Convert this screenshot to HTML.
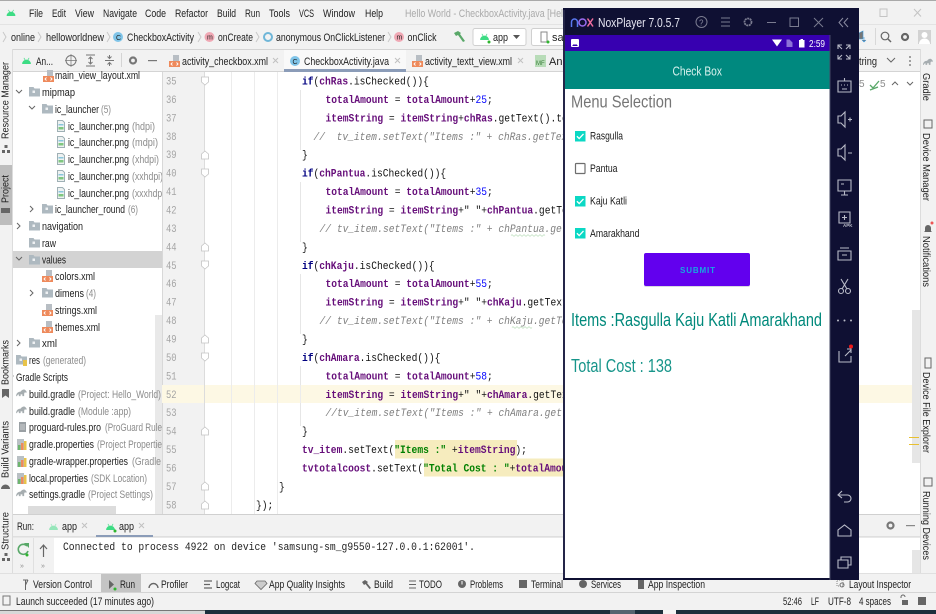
<!DOCTYPE html>
<html><head><meta charset="utf-8"><title>Android Studio</title>
<style>
html,body{margin:0;padding:0;background:#f2f2f2;width:936px;height:614px;overflow:hidden}
svg{display:block;position:absolute;left:0;top:0;filter:blur(.35px)}
text{font-family:"Liberation Sans",sans-serif;font-size:11px;fill:#222;white-space:pre}
.g{fill:#8c8c8c}
.m{font-family:"Liberation Mono",monospace;font-size:11px;font-weight:normal;fill:#111}
.k{fill:#000080;font-weight:bold}.f{fill:#660e7a;font-weight:bold}.n{fill:#0000ff}.s{fill:#008000;font-weight:bold}
.c{fill:#808080;font-style:italic;font-weight:normal}
.l{font-family:"Liberation Mono",monospace;font-size:11px;fill:#a4a4a4;font-weight:normal}
.i{fill:none;stroke:#b9bbc8;stroke-width:1.1}
.t{fill:none;stroke:#666;stroke-width:1}
.v{font-size:10.5px}
</style></head><body>
<svg width="936" height="614" viewBox="0 0 936 614" xmlns="http://www.w3.org/2000/svg">
<defs>
<symbol id="folder" viewBox="0 0 11 10" overflow="visible"><path d="M0 0h4.5l1 1.5h5.5v8h-11z" fill="#aeb9c0"/><rect x="3.5" y="3.5" width="2.5" height="2.5" fill="#fff" opacity=".8"/></symbol>
<symbol id="xml" viewBox="0 0 11 12" overflow="visible"><path d="M4 0h6v6h-6z" fill="#b8bec4"/><rect x="0" y="6" width="11" height="6" fill="#ee8a5c"/><path d="M3.5 7.5l-1.500 1.500 1.500 1.500M7.500 7.500l1.500 1.500-1.500 1.500" fill="none" stroke="#fff" stroke-width=".9"/></symbol>
<symbol id="png" viewBox="0 0 8 12" overflow="visible"><path d="M.5.5h5l2 2v9h-7z" fill="#eef2f2" stroke="#9fb0b5"/><rect x="1.500" y="4" width="5" height="1.500" fill="#88c6dc"/><rect x="1.500" y="7" width="5" height="2.500" fill="#7fc77f"/></symbol>
<symbol id="gr" viewBox="0 0 12 9" overflow="visible"><path d="M0 8c0-3 2-5 5-5 1-2 4-3 5-2s2 2 2 3h-2c-1 0-1 1-1 4h-2v-2h-2v2h-2v-2c-1 0-2 1-2 2z" fill="#a6adb0"/></symbol>
<symbol id="prop" viewBox="0 0 10 11" overflow="visible"><rect x="0" y="0" width="7" height="11" fill="#b9c0c4"/><rect x="1" y="6" width="2.500" height="5" fill="#6db56d"/><rect x="4" y="4" width="2.500" height="7" fill="#ee8a5c"/><rect x="7" y="2" width="2.500" height="9" fill="#e8c44a"/></symbol>
<symbol id="droid" viewBox="0 0 10 8" overflow="visible"><path d="M0 8a5 5 0 0 1 10 0z" fill="#3ddc84"/><path d="M2 1l1.500 2.500M8 1l-1.500 2.500" stroke="#3ddc84" stroke-width=".8"/></symbol>
<symbol id="chk" viewBox="0 0 11 11"><rect width="11" height="11" fill="#0bd8c4"/><path d="M2 5.500l2.400 2.400 4.500-4.800" fill="none" stroke="#fff" stroke-width="1.400"/></symbol>
</defs>

<!-- base -->
<rect width="936" height="614" fill="#f2f2f2"/>
<rect width="936" height="1" fill="#a9a9a9"/>
<rect y="24" width="936" height="1" fill="#e3e3e3"/>
<rect y="49" width="936" height="1" fill="#d4d4d4"/>
<rect y="71" width="936" height="1" fill="#d4d4d4"/>

<!-- title / menu -->
<use href="#droid" x="6" y="9" width="10" height="7"/>
<text x="29" y="17" textLength="14" lengthAdjust="spacingAndGlyphs">File</text>
<text x="52" y="17" textLength="14" lengthAdjust="spacingAndGlyphs">Edit</text>
<text x="75" y="17" textLength="19" lengthAdjust="spacingAndGlyphs">View</text>
<text x="103" y="17" textLength="34" lengthAdjust="spacingAndGlyphs">Navigate</text>
<text x="145" y="17" textLength="21" lengthAdjust="spacingAndGlyphs">Code</text>
<text x="175" y="17" textLength="33" lengthAdjust="spacingAndGlyphs">Refactor</text>
<text x="217" y="17" textLength="19" lengthAdjust="spacingAndGlyphs">Build</text>
<text x="245" y="17" textLength="15" lengthAdjust="spacingAndGlyphs">Run</text>
<text x="269" y="17" textLength="21" lengthAdjust="spacingAndGlyphs">Tools</text>
<text x="299" y="17" textLength="15" lengthAdjust="spacingAndGlyphs">VCS</text>
<text x="323" y="17" textLength="32" lengthAdjust="spacingAndGlyphs">Window</text>
<text x="365" y="17" textLength="18" lengthAdjust="spacingAndGlyphs">Help</text>
<text x="405" y="17" class="g" style="fill:#aaa" textLength="158" lengthAdjust="spacingAndGlyphs">Hello World - CheckboxActivity.java [Hel</text>
<rect x="880" y="9" width="7" height="7.500" fill="none" stroke="#c4c4c4"/>
<path d="M914 9l7 7.500M921 9l-7 7.500" stroke="#c4c4c4"/>

<!-- breadcrumb -->
<path d="M3 32l3 5-3 5M38 32l3 5-3 5M107 32l3 5-3 5M198 32l3 5-3 5M256 32l3 5-3 5M388 32l3 5-3 5" fill="none" stroke="#c8c8c8"/>
<text x="11" y="41" textLength="24" lengthAdjust="spacingAndGlyphs">online</text>
<text x="46" y="41" textLength="58" lengthAdjust="spacingAndGlyphs">helloworldnew</text>
<circle cx="118" cy="37" r="5" fill="#7fc4e8"/><text x="116" y="40" style="font-size:7px">C</text>
<text x="127" y="41" textLength="67" lengthAdjust="spacingAndGlyphs">CheckboxActivity</text>
<circle cx="209.500" cy="37" r="5" fill="#f0a8b4"/><text x="207" y="39.500" style="font-size:7px">m</text>
<text x="218" y="41" textLength="35" lengthAdjust="spacingAndGlyphs">onCreate</text>
<circle cx="268" cy="37" r="4" fill="none" stroke="#6fb6d8" stroke-width="2"/>
<text x="276" y="41" textLength="109" lengthAdjust="spacingAndGlyphs">anonymous OnClickListener</text>
<circle cx="399" cy="37" r="5" fill="#f0a8b4"/><text x="396.500" y="39.500" style="font-size:7px">m</text>
<text x="407.500" y="41" textLength="29" lengthAdjust="spacingAndGlyphs">onClick</text>
<path d="M454 33l4-2 3 2-1 1 5 7-2 1-5-7-2 1z" fill="#59a869"/>
<rect x="473" y="28.500" width="53" height="17" rx="2" fill="#fff" stroke="#d0d0d0"/>
<use href="#droid" x="480" y="33" width="9" height="7"/><circle cx="489" cy="42" r="1.500" fill="#2fb52f"/>
<text x="493" y="41" textLength="15" lengthAdjust="spacingAndGlyphs">app</text>
<path d="M513 35h7l-3.500 4z" fill="#555"/>
<rect x="531.500" y="28.500" width="40" height="17" rx="2" fill="#fff" stroke="#d0d0d0"/>
<rect x="541" y="32" width="6" height="10" fill="none" stroke="#888"/><circle cx="548" cy="42" r="1.500" fill="#2fb52f"/>
<text x="552" y="41">sam</text>
<!-- right toolbar -->
<rect x="875" y="28" width="1" height="17" fill="#d8d8d8"/>
<path d="M859 33l4-2v8h-4zM864 37v5m-2-2l2 2 2-2" fill="#777" stroke="#3f97d8" stroke-width=".6"/>
<circle cx="885" cy="36" r="3.800" fill="none" stroke="#666" stroke-width="1.200"/><path d="M888 39l3 3" stroke="#666" stroke-width="1.500"/>
<circle cx="905" cy="37" r="3" fill="none" stroke="#666" stroke-width="2.200"/>
<rect x="918" y="30" width="13" height="14" fill="#d2d2d2"/><circle cx="924.500" cy="35" r="3" fill="#fff"/><path d="M919 44a5.500 5.500 0 0 1 11 0z" fill="#fff"/>

<!-- project header -->
<use href="#droid" x="22" y="57" width="9" height="7"/>
<text x="36" y="65" textLength="17" lengthAdjust="spacingAndGlyphs">An...</text>
<circle cx="71" cy="60.500" r="5" fill="none" stroke="#777"/><path d="M71 54v13M65 60.500h12" stroke="#777" stroke-width=".7"/>
<path d="M86 55h9M86 66h9M90.500 57v7M88.500 59l2-2 2 2M88.500 62l2 2 2-2" fill="none" stroke="#777"/>
<path d="M105 60.500h9M109.500 55v3M107.500 56.500l2 2 2-2M109.500 66v-3M107.500 64.500l2-2 2 2" fill="none" stroke="#777"/>
<rect x="121" y="53" width="1" height="14" fill="#d4d4d4"/>
<circle cx="133" cy="60.500" r="3" fill="none" stroke="#777" stroke-width="2.200"/>
<rect x="148" y="60" width="9" height="1.200" fill="#777"/>

<!-- tree -->
<rect x="12" y="72" width="150" height="443" fill="#fff"/>
<rect x="12" y="251" width="150" height="17" fill="#d3d3d3"/>
<rect x="155" y="315" width="7" height="200" fill="#e9e9e9"/>

<use href="#xml" x="43" y="70" width="11" height="12"/>
<text x="55" y="79" textLength="85" lengthAdjust="spacingAndGlyphs">main_view_layout.xml</text>

<path d="M16 90l3 3 3-3M29 106l3 3 3-3M16 257l3 3 3-3" class="t"/>
<path d="M30 206l3 3-3 3M17 223l3 3-3 3M30 290l3 3-3 3M17 340l3 3-3 3M12 374l1 2-1 2" class="t"/>

<use href="#folder" x="29" y="87" width="11" height="10"/><text x="42" y="96" textLength="33" lengthAdjust="spacingAndGlyphs">mipmap</text>
<use href="#folder" x="42" y="104" width="11" height="10"/><text x="55" y="113" textLength="44" lengthAdjust="spacingAndGlyphs">ic_launcher</text><text x="101" y="113" class="g" textLength="10" lengthAdjust="spacingAndGlyphs">(5)</text>

<use href="#png" x="57" y="120" width="8" height="12"/><text x="68" y="130" textLength="61" lengthAdjust="spacingAndGlyphs">ic_launcher.png</text><text x="132" y="130" class="g" textLength="23" lengthAdjust="spacingAndGlyphs">(hdpi)</text>
<use href="#png" x="57" y="136" width="8" height="12"/><text x="68" y="146" textLength="61" lengthAdjust="spacingAndGlyphs">ic_launcher.png</text><text x="132" y="146" class="g" textLength="26" lengthAdjust="spacingAndGlyphs">(mdpi)</text>
<use href="#png" x="57" y="153" width="8" height="12"/><text x="68" y="163" textLength="61" lengthAdjust="spacingAndGlyphs">ic_launcher.png</text><text x="132" y="163" class="g" textLength="27" lengthAdjust="spacingAndGlyphs">(xhdpi)</text>
<use href="#png" x="57" y="170" width="8" height="12"/><text x="68" y="180" textLength="61" lengthAdjust="spacingAndGlyphs">ic_launcher.png</text><text x="132" y="180" class="g" textLength="31" lengthAdjust="spacingAndGlyphs">(xxhdpi)</text>
<use href="#png" x="57" y="187" width="8" height="12"/><text x="68" y="197" textLength="61" lengthAdjust="spacingAndGlyphs">ic_launcher.png</text><text x="132" y="197" class="g" textLength="35" lengthAdjust="spacingAndGlyphs">(xxxhdpi)</text>

<use href="#folder" x="42" y="204" width="11" height="10"/><text x="55" y="213" textLength="70" lengthAdjust="spacingAndGlyphs">ic_launcher_round</text><text x="128" y="213" class="g" textLength="10" lengthAdjust="spacingAndGlyphs">(6)</text>
<use href="#folder" x="29" y="221" width="11" height="10"/><text x="42" y="230" textLength="41" lengthAdjust="spacingAndGlyphs">navigation</text>
<use href="#folder" x="29" y="238" width="11" height="10"/><text x="42" y="247" textLength="14" lengthAdjust="spacingAndGlyphs">raw</text>
<use href="#folder" x="29" y="255" width="11" height="10"/><text x="42" y="263.500" textLength="24" lengthAdjust="spacingAndGlyphs">values</text>
<use href="#xml" x="42" y="270" width="11" height="12"/><text x="55" y="280" textLength="40" lengthAdjust="spacingAndGlyphs">colors.xml</text>
<use href="#folder" x="42" y="288" width="11" height="10"/><text x="55" y="297" textLength="29" lengthAdjust="spacingAndGlyphs">dimens</text><text x="86" y="297" class="g" textLength="10" lengthAdjust="spacingAndGlyphs">(4)</text>
<use href="#xml" x="42" y="304" width="11" height="12"/><text x="55" y="314" textLength="42" lengthAdjust="spacingAndGlyphs">strings.xml</text>
<use href="#xml" x="42" y="321" width="11" height="12"/><text x="55" y="331" textLength="45" lengthAdjust="spacingAndGlyphs">themes.xml</text>
<use href="#folder" x="29" y="338" width="11" height="10"/><text x="42" y="347" textLength="15" lengthAdjust="spacingAndGlyphs">xml</text>
<use href="#folder" x="16" y="355" width="11" height="10"/><rect x="23" y="360" width="4" height="6" fill="#e8c44a"/><text x="29" y="364" textLength="11" lengthAdjust="spacingAndGlyphs">res</text><text x="43" y="364" class="g" textLength="43" lengthAdjust="spacingAndGlyphs">(generated)</text>
<text x="16" y="381" textLength="52" lengthAdjust="spacingAndGlyphs">Gradle Scripts</text>
<use href="#gr" x="16" y="389" width="11" height="8"/><text x="29" y="398" textLength="46" lengthAdjust="spacingAndGlyphs">build.gradle</text><text x="78" y="398" class="g" textLength="83" lengthAdjust="spacingAndGlyphs">(Project: Hello_World)</text>
<use href="#gr" x="16" y="406" width="11" height="8"/><text x="29" y="415" textLength="46" lengthAdjust="spacingAndGlyphs">build.gradle</text><text x="78" y="415" class="g" textLength="53" lengthAdjust="spacingAndGlyphs">(Module :app)</text>
<rect x="19" y="422" width="7" height="10" fill="#9aa0a4"/><path d="M20 425h5M20 427h5M20 429h5" stroke="#fff" stroke-width=".6"/><text x="29" y="431" textLength="72" lengthAdjust="spacingAndGlyphs">proguard-rules.pro</text><text x="105" y="431" class="g" textLength="57" lengthAdjust="spacingAndGlyphs">(ProGuard Rule</text>
<use href="#prop" x="17" y="439" width="10" height="11"/><text x="29" y="448" textLength="65" lengthAdjust="spacingAndGlyphs">gradle.properties</text><text x="97" y="448" class="g" textLength="65" lengthAdjust="spacingAndGlyphs">(Project Propertie</text>
<use href="#prop" x="17" y="456" width="10" height="11"/><text x="29" y="465" textLength="99" lengthAdjust="spacingAndGlyphs">gradle-wrapper.properties</text><text x="132" y="465" class="g" textLength="29" lengthAdjust="spacingAndGlyphs">(Gradle</text>
<use href="#prop" x="17" y="473" width="10" height="11"/><text x="29" y="482" textLength="59" lengthAdjust="spacingAndGlyphs">local.properties</text><text x="91" y="482" class="g" textLength="56" lengthAdjust="spacingAndGlyphs">(SDK Location)</text>
<use href="#gr" x="16" y="489" width="11" height="8"/><text x="29" y="498" textLength="56" lengthAdjust="spacingAndGlyphs">settings.gradle</text><text x="88" y="498" class="g" textLength="65" lengthAdjust="spacingAndGlyphs">(Project Settings)</text>
<rect x="28" y="506" width="88" height="8" fill="#dcdcdc"/>

<!-- left strip -->
<rect x="0" y="49" width="12" height="525" fill="#f2f2f2"/>
<rect x="12" y="49" width="1" height="525" fill="#dcdcdc"/>
<rect x="0" y="165" width="12" height="60" fill="#bdbdbd"/>
<text class="v" transform="translate(8.500,139) rotate(-90)" textLength="77" lengthAdjust="spacingAndGlyphs">Resource Manager</text>
<text class="v" transform="translate(8.500,203) rotate(-90)" textLength="28" lengthAdjust="spacingAndGlyphs">Project</text>
<text class="v" transform="translate(8.500,385) rotate(-90)" textLength="45" lengthAdjust="spacingAndGlyphs">Bookmarks</text>
<text class="v" transform="translate(8.500,478) rotate(-90)" textLength="57" lengthAdjust="spacingAndGlyphs">Build Variants</text>
<text class="v" transform="translate(8.500,550) rotate(-90)" textLength="38" lengthAdjust="spacingAndGlyphs">Structure</text>
<path d="M2 150h3v3h-3zM7 150h3v3h-3zM4.500 145h3v3h-3z" fill="#666"/>
<rect x="1" y="208" width="9" height="5" fill="#666"/>
<path d="M2 389h7v9l-3.500-2.500-3.500 2.500z" fill="#666"/>
<path d="M1 489a4.500 4.500 0 0 1 9 0z" fill="#666"/>
<path d="M2 558h3v3h-3zM7 558h3v3h-3zM4.500 553h3v3h-3z" fill="#666"/>

<!-- editor tabs -->
<rect x="162" y="50" width="774" height="21" fill="#f2f2f2"/>
<use href="#xml" x="169" y="55" width="11" height="12"/>
<text x="182" y="65" textLength="86" lengthAdjust="spacingAndGlyphs">activity_checkbox.xml</text>
<path d="M273 58l5 5M278 58l-5 5" stroke="#c0c0c0"/>
<rect x="284" y="50" width="122" height="21" fill="#fff" opacity=".55"/>
<rect x="284" y="69" width="122" height="3" fill="#8b9cb8"/>
<circle cx="295" cy="61" r="5" fill="#7fc4e8"/><text x="292.500" y="64" style="font-size:7px">C</text>
<text x="304" y="65" textLength="85" lengthAdjust="spacingAndGlyphs">CheckboxActivity.java</text>
<path d="M395 58l5 5M400 58l-5 5" stroke="#c0c0c0"/>
<use href="#xml" x="412" y="55" width="11" height="12"/>
<text x="425" y="65" textLength="87" lengthAdjust="spacingAndGlyphs">activity_textt_view.xml</text>
<path d="M518 58l5 5M523 58l-5 5" stroke="#c0c0c0"/>
<rect x="535" y="55" width="11" height="12" fill="#b8dcb8"/><text x="536" y="65" style="font-size:6px;fill:#3a7f3a">MF</text>
<text x="549" y="65">And</text>
<text x="859" y="65" textLength="18" lengthAdjust="spacingAndGlyphs">tring</text>
<path d="M887 58l4 4 4-4" class="t"/>
<circle cx="910" cy="57" r=".9" fill="#666"/><circle cx="910" cy="61" r=".9" fill="#666"/><circle cx="910" cy="65" r=".9" fill="#666"/>

<!-- editor -->
<rect x="162" y="72" width="758" height="442" fill="#fff"/>
<rect x="162" y="72" width="42" height="442" fill="#f2f2f2"/>
<rect x="162" y="72" width="1" height="442" fill="#d8d8d8"/>
<rect x="162" y="385" width="758" height="18" fill="#fdf8e4"/>
<path d="M204.500 72v442" stroke="#dcdcdc"/>
<path d="M231.500 72v442M254.500 72v442M277.500 72v442" stroke="#ececec"/>
<path d="M300.500 90v60M300.500 182v60M300.500 274v60M300.500 366v60" stroke="#e6e6e6"/>
<rect x="230" y="385" width="75" height="18" fill="#fdf8e4"/>
<path d="M231.500 385v18M254.500 385v18M277.500 385v18M300.500 385v18" stroke="#ececec"/>

<g transform="scale(.8,1)">
<text class="l" x="207.500" y="84.500">35</text><text class="l" x="207.500" y="102.900">36</text><text class="l" x="207.500" y="121.400">37</text><text class="l" x="207.500" y="139.800">38</text><text class="l" x="207.500" y="158.200">39</text><text class="l" x="207.500" y="176.600">40</text><text class="l" x="207.500" y="195.100">41</text><text class="l" x="207.500" y="213.500">42</text><text class="l" x="207.500" y="231.900">43</text><text class="l" x="207.500" y="250.400">44</text><text class="l" x="207.500" y="268.800">45</text><text class="l" x="207.500" y="287.200">46</text><text class="l" x="207.500" y="305.600">47</text><text class="l" x="207.500" y="324.100">48</text><text class="l" x="207.500" y="342.500">49</text><text class="l" x="207.500" y="360.900">50</text><text class="l" x="207.500" y="379.300">51</text><text class="l" x="207.500" y="397.800">52</text><text class="l" x="207.500" y="416.200">53</text><text class="l" x="207.500" y="434.600">54</text><text class="l" x="207.500" y="453.100">55</text><text class="l" x="207.500" y="471.500">56</text><text class="l" x="207.500" y="489.900">57</text><text class="l" x="207.500" y="508.300">58</text>
</g>
<!-- fold markers -->
<g fill="#fff" stroke="#c4c4c4" stroke-width=".8">
<path d="M201.500 77h7v5l-3.500 3-3.500-3z"/><path d="M201.500 169h7v5l-3.500 3-3.500-3z"/><path d="M201.500 261h7v5l-3.500 3-3.500-3z"/><path d="M201.500 353h7v5l-3.500 3-3.500-3z"/>
<path d="M201.500 159h7v-5l-3.500-3-3.500 3z"/><path d="M201.500 251h7v-5l-3.500-3-3.500 3z"/><path d="M201.500 343h7v-5l-3.500-3-3.500 3z"/><path d="M201.500 435h7v-5l-3.500-3-3.500 3z"/><path d="M201.500 490h7v-5l-3.500-3-3.500 3z"/><path d="M201.500 509h7v-5l-3.500-3-3.500 3z"/>
</g>

<rect x="395" y="440" width="122" height="18.500" fill="#f6ecbe"/>
<rect x="424" y="458.500" width="142" height="18" fill="#f6ecbe"/>

<!-- code: 11px mono condensed to the source's 5.77px advance -->
<g transform="scale(.874,1)">
<text class="m" x="345.500" y="84.500"><tspan class="k">if</tspan>(<tspan class="f">chRas</tspan>.isChecked()){</text>
<text class="m" x="372.400" y="102.900"><tspan class="f">totalAmount</tspan> = <tspan class="f">totalAmount</tspan>+<tspan class="n">25</tspan>;</text>
<text class="m" x="372.400" y="121.400"><tspan class="f">itemString</tspan> = <tspan class="f">itemString</tspan>+<tspan class="f">chRas</tspan>.getText().toString();</text>
<text class="m c" x="358.700" y="139.800">//  tv_item.setText("Items :" + chRas.getText().toString());</text>
<text class="m" x="345.500" y="158.200">}</text>
<text class="m" x="345.500" y="176.600"><tspan class="k">if</tspan>(<tspan class="f">chPantua</tspan>.isChecked()){</text>
<text class="m" x="372.400" y="195.100"><tspan class="f">totalAmount</tspan> = <tspan class="f">totalAmount</tspan>+<tspan class="n">35</tspan>;</text>
<text class="m" x="372.400" y="213.500"><tspan class="f">itemString</tspan> = <tspan class="f">itemString</tspan>+" "+<tspan class="f">chPantua</tspan>.getText().toString();</text>
<text class="m c" x="365.600" y="231.900">// tv_item.setText("Items :" + chPantua.getText().toString());</text>
<text class="m" x="345.500" y="250.400">}</text>
<text class="m" x="345.500" y="268.800"><tspan class="k">if</tspan>(<tspan class="f">chKaju</tspan>.isChecked()){</text>
<text class="m" x="372.400" y="287.200"><tspan class="f">totalAmount</tspan> = <tspan class="f">totalAmount</tspan>+<tspan class="n">55</tspan>;</text>
<text class="m" x="372.400" y="305.600"><tspan class="f">itemString</tspan> = <tspan class="f">itemString</tspan>+" "+<tspan class="f">chKaju</tspan>.getText().toString();</text>
<text class="m c" x="365.600" y="324.100">// tv_item.setText("Items :" + chKaju.getText().toString());</text>
<text class="m" x="345.500" y="342.500">}</text>
<text class="m" x="345.500" y="360.900"><tspan class="k">if</tspan>(<tspan class="f">chAmara</tspan>.isChecked()){</text>
<text class="m" x="372.400" y="379.300"><tspan class="f">totalAmount</tspan> = <tspan class="f">totalAmount</tspan>+<tspan class="n">58</tspan>;</text>
<text class="m" x="372.400" y="397.800"><tspan class="f">itemString</tspan> = <tspan class="f">itemString</tspan>+" "+<tspan class="f">chAmara</tspan>.getText().toString();</text>
<text class="m c" x="372.400" y="416.200">//tv_item.setText("Items :" + chAmara.getText().toString());</text>
<text class="m" x="345.500" y="434.600">}</text>
<text class="m" x="345.500" y="453.100"><tspan class="f">tv_item</tspan>.setText(<tspan class="s">"Items :"</tspan> +<tspan class="f">itemString</tspan>);</text>
<text class="m" x="345.500" y="471.500"><tspan class="f">tvtotalcoost</tspan>.setText(<tspan class="s">"Total Cost : "</tspan>+<tspan class="f">totalAmount</tspan>);</text>
<text class="m" x="319.200" y="489.900">}</text>
<text class="m" x="292.900" y="508.300">});</text>
</g>
<path d="M511 235.500q1-1.500 2 0t2 0 2 0 2 0 2 0 2 0 2 0 2 0 2 0 2 0 2 0 2 0 2 0 2 0 2 0 2 0 2 0M512 327.500q1-1.500 2 0t2 0 2 0 2 0 2 0 2 0 2 0 2 0 2 0 2 0" fill="none" stroke="#9ccf9c" stroke-width=".6"/>

<!-- inspection row + editor scrollbar -->
<text x="859" y="87" class="g" style="font-size:10px">5</text>
<path d="M870 85l3 3 6-7M870 90l8-3" fill="none" stroke="#59a869" stroke-width="1.300"/>
<text x="880" y="87" class="g" style="font-size:10px">5</text>
<path d="M892 85l3-3 3 3M907 82l3 3 3-3" class="t"/>
<rect x="912" y="310" width="8" height="153" fill="#e6e6e6"/>
<rect x="909" y="437" width="10" height="1" fill="#e8c030"/>
<rect x="909" y="444" width="10" height="1" fill="#e8c030"/>

<!-- right strip -->
<rect x="920" y="49" width="16" height="543" fill="#f2f2f2"/>
<rect x="920" y="49" width="1" height="525" fill="#dcdcdc"/>
<use href="#gr" x="923" y="58" width="10" height="8"/>
<text class="v" transform="translate(923,73) rotate(90)" textLength="28" lengthAdjust="spacingAndGlyphs">Gradle</text>
<rect x="924" y="120" width="8" height="8" fill="none" stroke="#666"/>
<text class="v" transform="translate(923,133) rotate(90)" textLength="68" lengthAdjust="spacingAndGlyphs">Device Manager</text>
<path d="M924 232h8l-1-1v-3a3 3 0 0 0-6 0v3z" fill="#666"/><circle cx="932" cy="223" r="1.500" fill="#e55"/>
<text class="v" transform="translate(923,236) rotate(90)" textLength="51" lengthAdjust="spacingAndGlyphs">Notifications</text>
<rect x="925" y="358" width="6" height="10" fill="none" stroke="#666"/>
<text class="v" transform="translate(923,372) rotate(90)" textLength="81" lengthAdjust="spacingAndGlyphs">Device File Explorer</text>
<rect x="924" y="478" width="8" height="8" fill="none" stroke="#666"/>
<text class="v" transform="translate(923,491) rotate(90)" textLength="69" lengthAdjust="spacingAndGlyphs">Running Devices</text>

<!-- run panel -->
<rect x="13" y="514" width="907" height="1" fill="#d0d0d0"/>
<rect x="13" y="515" width="907" height="22" fill="#f2f2f2"/>
<rect x="13" y="536" width="907" height="1.500" fill="#dfdfdf"/>
<text x="17" y="530" textLength="17" lengthAdjust="spacingAndGlyphs">Run:</text>
<g opacity=".5"><use href="#droid" x="49" y="523" width="9" height="7"/></g>
<text x="62" y="530" textLength="15" lengthAdjust="spacingAndGlyphs">app</text>
<path d="M82 523l5 5M87 523l-5 5" stroke="#c0c0c0"/>
<use href="#droid" x="106" y="523" width="9" height="7"/><circle cx="115" cy="531" r="1.500" fill="#2fb52f"/>
<text x="119" y="530" textLength="15" lengthAdjust="spacingAndGlyphs">app</text>
<path d="M139 523l5 5M144 523l-5 5" stroke="#c0c0c0"/>
<rect x="96" y="535" width="57" height="2" fill="#8b9cb8"/>
<rect x="13" y="538" width="907" height="35" fill="#fff"/>
<rect x="13" y="538" width="41" height="35" fill="#f2f2f2"/>
<rect x="33" y="538" width="1" height="35" fill="#e0e0e0"/>
<path d="M27 546a5 5 0 1 0 1 5" fill="none" stroke="#59a869" stroke-width="1.600"/><path d="M24 543h5v5z" fill="#59a869"/><circle cx="27" cy="555" r="1.500" fill="#2fb52f"/>
<path d="M43.500 557v-11M40 549l3.500-4 3.500 4" fill="none" stroke="#666" stroke-width="1.200"/>
<text x="20" y="568" class="g" style="font-size:7px">»</text><text x="41" y="568" class="g" style="font-size:7px">»</text>
<text class="m" x="63" y="550" style="fill:#222" textLength="412" lengthAdjust="spacingAndGlyphs">Connected to process 4922 on device 'samsung-sm_g9550-127.0.0.1:62001'.</text>
<rect x="912" y="550" width="8" height="23" fill="#e6e6e6"/>
<circle cx="890.500" cy="525.500" r="3" fill="none" stroke="#777" stroke-width="2.200"/>
<rect x="906" y="525" width="9" height="1.200" fill="#888"/>

<!-- tool window bar -->
<rect y="573" width="936" height="19" fill="#f2f2f2"/>
<rect y="573" width="936" height="1" fill="#e0e0e0"/>
<rect y="592" width="936" height="1" fill="#d4d4d4"/>
<rect x="101" y="574" width="40" height="18" fill="#c4c4c4"/>
<path d="M23 580h5M25.500 580v10M28 580l-2.500 5" fill="none" stroke="#666"/>
<text x="33" y="588" textLength="59" lengthAdjust="spacingAndGlyphs">Version Control</text>
<path d="M109 580l5 4.500-5 4.500z" fill="#666"/><circle cx="115" cy="589" r="1.500" fill="#2fb52f"/>
<text x="120" y="588" textLength="15" lengthAdjust="spacingAndGlyphs">Run</text>
<path d="M149 588a4.500 4.500 0 0 1 9 0" fill="none" stroke="#666" stroke-width="1.400"/>
<text x="161" y="588" textLength="27" lengthAdjust="spacingAndGlyphs">Profiler</text>
<path d="M204 581h8M204 584.500h6M204 588h8" stroke="#666" stroke-width="1.200"/>
<text x="216" y="588" textLength="24" lengthAdjust="spacingAndGlyphs">Logcat</text>
<path d="M257 581h8l2 2.500-6 6-6-6z" fill="#ccc" stroke="#666" stroke-width=".8"/>
<text x="269" y="588" textLength="76" lengthAdjust="spacingAndGlyphs">App Quality Insights</text>
<path d="M362 582l3-2 3 2-1 1 4 5-1.500 1-4-5-1.500 1z" fill="#666"/>
<text x="374" y="588" textLength="19" lengthAdjust="spacingAndGlyphs">Build</text>
<path d="M409 581h7M409 584.500h7M409 588h7" stroke="#666"/>
<text x="419" y="588" textLength="23" lengthAdjust="spacingAndGlyphs">TODO</text>
<circle cx="462" cy="584" r="4" fill="#666"/><rect x="461.500" y="581" width="1" height="3.500" fill="#fff"/>
<text x="470" y="588" textLength="33" lengthAdjust="spacingAndGlyphs">Problems</text>
<rect x="519" y="580" width="8" height="8" fill="#666"/>
<text x="531" y="588" textLength="32" lengthAdjust="spacingAndGlyphs">Terminal</text>
<circle cx="583" cy="584" r="4" fill="#666"/>
<text x="591" y="588" textLength="30" lengthAdjust="spacingAndGlyphs">Services</text>
<rect x="638" y="580" width="6" height="9" fill="#666"/>
<text x="648" y="588" textLength="57" lengthAdjust="spacingAndGlyphs">App Inspection</text>
<rect x="837" y="580" width="6" height="6" fill="none" stroke="#888" stroke-dasharray="1 1"/><circle cx="842" cy="585" r="2" fill="none" stroke="#777"/>
<text x="849" y="588" textLength="62" lengthAdjust="spacingAndGlyphs">Layout Inspector</text>

<!-- status -->
<rect x="3" y="596" width="7" height="9" fill="none" stroke="#777"/>
<text x="16" y="605" textLength="138" lengthAdjust="spacingAndGlyphs">Launch succeeded (17 minutes ago)</text>
<text x="783" y="605" textLength="19" lengthAdjust="spacingAndGlyphs">52:46</text>
<text x="811" y="605" textLength="8" lengthAdjust="spacingAndGlyphs">LF</text>
<text x="828" y="605" textLength="23" lengthAdjust="spacingAndGlyphs">UTF-8</text>
<text x="859" y="605" textLength="32" lengthAdjust="spacingAndGlyphs">4 spaces</text>
<path d="M901 598v-1a2 2 0 0 1 4 0" fill="none" stroke="#666"/><rect x="902" y="600" width="6" height="5" fill="#666"/>
<rect x="918" y="597" width="8" height="8" fill="#666"/>

<!-- bottom strip -->
<rect y="610" width="936" height="4" fill="#1c2f3c"/>
<rect x="0" y="610" width="205" height="4" fill="#d8d8d8"/>
<rect x="0" y="610" width="205" height="1" fill="#777"/>
<rect x="610" y="610" width="25" height="4" fill="#556470"/>
<rect x="663" y="610" width="13" height="4" fill="#f4f4f4"/>

<!-- Nox window -->
<rect x="563" y="8" width="296" height="572" fill="#0f1033"/>
<rect x="565" y="35" width="265" height="543" fill="#fff"/>
<rect x="565" y="35" width="265" height="16" fill="#3700b0"/>
<rect x="565" y="51" width="265" height="38" fill="#00897f"/>
<path d="M564 10v568" stroke="#3a3a5c"/>
<path d="M830 35v545" stroke="#444866"/>

<!-- nox logo/title -->
<path d="M571.500 27v-5a3 3 0 0 1 6 0v5" fill="none" stroke="#5a78f0" stroke-width="1.500"/>
<circle cx="582.500" cy="22.500" r="3.500" fill="none" stroke="#9a6cf0" stroke-width="1.500"/>
<path d="M587.500 18.500l5.500 8M593 18.500l-5.500 8" fill="none" stroke="#ef6d9e" stroke-width="1.500"/>
<text x="598" y="27" style="font-size:13px;fill:#e8e8f4" textLength="82" lengthAdjust="spacingAndGlyphs">NoxPlayer 7.0.5.7</text>
<circle cx="701.500" cy="22" r="5.500" fill="none" stroke="#7a7b90"/><text x="699" y="25.500" style="font-size:8px;fill:#8a8ba0">?</text>
<path d="M721 18h9M721 22h9M721 26h9" stroke="#7a7b90"/>
<circle cx="748" cy="22" r="3.500" fill="none" stroke="#7a7b90" stroke-width="1.800" stroke-dasharray="2 .6"/>
<path d="M767 22.500h9" stroke="#7a7b90"/>
<rect x="790" y="18" width="8.500" height="8.500" fill="none" stroke="#7a7b90"/>
<path d="M814 18l9 9M823 18l-9 9" stroke="#7a7b90"/>
<path d="M843 18l-4 4.500 4 4.500M848 18l-4 4.500 4 4.500" fill="none" stroke="#8a8ba0"/>

<!-- status bar -->
<rect x="571" y="39" width="8" height="8" rx="1" fill="#fff"/><path d="M572 46l2-2 1 1 1-1 2 2z" fill="#3700b0"/>
<path d="M772 39.500h10l-5 7z" fill="#fff"/>
<path d="M786.500 39.500h3l3 3v4.500h-6z" fill="#8d72d8"/>
<rect x="799" y="40" width="5.500" height="7.500" fill="#fff"/><rect x="800.500" y="39" width="2.500" height="1" fill="#fff"/>
<text x="809" y="47" style="font-size:10px;fill:#fff" textLength="16" lengthAdjust="spacingAndGlyphs">2:59</text>

<text x="672.500" y="75.500" style="font-size:13px;fill:#d8f2ee" textLength="49.500" lengthAdjust="spacingAndGlyphs">Check Box</text>
<text x="571" y="107.500" style="font-size:17.500px;fill:#757575" textLength="101" lengthAdjust="spacingAndGlyphs">Menu Selection</text>

<use href="#chk" x="575" y="131" width="10.500" height="10.500"/>
<rect x="575.500" y="163.500" width="9.500" height="10" rx=".8" fill="none" stroke="#6e6e6e" stroke-width="1.200"/>
<use href="#chk" x="575" y="196" width="10.500" height="10.500"/>
<use href="#chk" x="575" y="228" width="10.500" height="10.500"/>
<text x="590" y="139.500" textLength="33" lengthAdjust="spacingAndGlyphs" style="fill:#1a1a1a">Rasgulla</text>
<text x="590" y="172" textLength="27.500" lengthAdjust="spacingAndGlyphs" style="fill:#1a1a1a">Pantua</text>
<text x="590" y="204.500" textLength="37" lengthAdjust="spacingAndGlyphs" style="fill:#1a1a1a">Kaju Katli</text>
<text x="590" y="237" textLength="49.500" lengthAdjust="spacingAndGlyphs" style="fill:#1a1a1a">Amarakhand</text>

<rect x="644" y="254" width="106" height="33" rx="2" fill="#d8d8e0"/>
<rect x="644" y="253" width="106" height="33" rx="2" fill="#6200ee"/>
<text x="680" y="273" textLength="35" style="font-size:8px;font-weight:bold;fill:#16a8e0">SUBMIT</text>

<text x="571" y="326" style="font-size:18px;fill:#00897b" textLength="251" lengthAdjust="spacingAndGlyphs">Items :Rasgulla Kaju Katli Amarakhand</text>
<text x="571" y="372" style="font-size:18px;fill:#17958a" textLength="101" lengthAdjust="spacingAndGlyphs">Total Cost : 138</text>

<!-- nox side icons -->
<path class="i" d="M838 49v-4h4M850 49v-4h-4M838 55v4h4M850 55v4h-4M838 45l4 4M850 45l-4 4M838 59l4-4M850 59l-4-4"/>
<path class="i" d="M838 81h13v11h-13zM844.500 81v-3M841 85h1M844 85h1M847 85h1M842 89h5"/>
<path class="i" d="M838 116h3l4-4v15l-4-4h-3zM848 119.500h4M850 117.500v4"/>
<path class="i" d="M838 149h3l4-4v15l-4-4h-3zM848 153h4"/>
<path class="i" d="M838 180h13v11h-13zM841 195h7M844.500 191v4M841 184h3"/>
<path class="i" d="M839 212h11v11h-11zM844.500 215v5M842 217.500h5"/>
<text x="843" y="227" style="font-size:4.500px;fill:#b9bbc8;font-weight:bold">APK</text>
<path class="i" d="M840 248h9M838 251h13v9h-13zM842 255h5"/>
<circle class="i" cx="841" cy="291" r="2.500"/><circle class="i" cx="848" cy="291" r="2.500"/><path class="i" d="M842 289l6-10M847 289l-6-10"/>
<path class="i" d="M839 351v11h12v-6M845 356l6-6M847 349h4v4"/>
<path class="i" d="M842 491l-4 4 4 3M838 495h9.500a3.500 3.500 0 0 1 0 7h-3.500"/>
<path class="i" d="M838 536v-6l6.500-5 6.500 5v6z"/>
<path class="i" d="M838 560h10v8h-10zM841 560v-3h10v8h-3"/>
<circle cx="838" cy="320.500" r="1" fill="#b9bbc8"/><circle cx="844.500" cy="320.500" r="1" fill="#b9bbc8"/><circle cx="851" cy="320.500" r="1" fill="#b9bbc8"/>
<circle cx="851" cy="346.500" r="2" fill="#f01818"/>
</svg>
</body></html>
